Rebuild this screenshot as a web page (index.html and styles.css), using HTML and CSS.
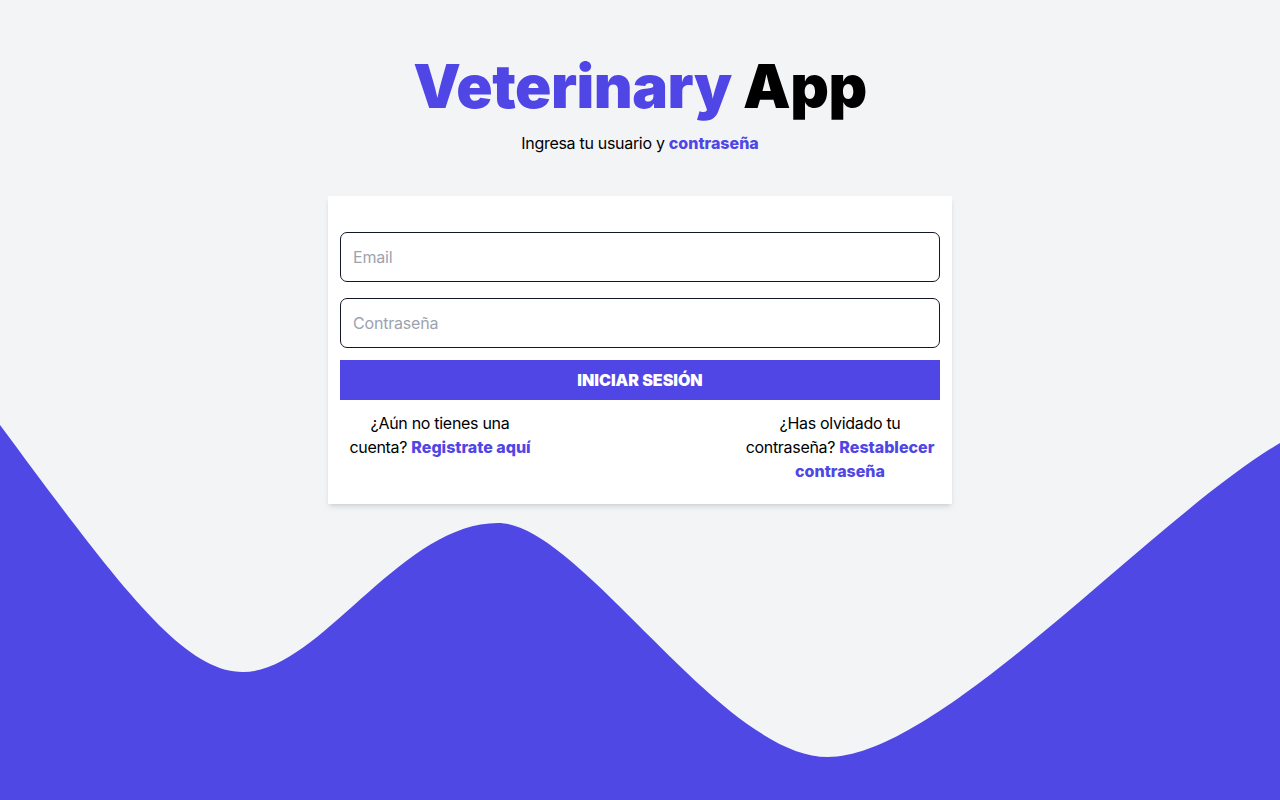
FILE: index.html
```html
<!DOCTYPE html>
<html lang="es">
<head>
<meta charset="utf-8">
<title>Veterinary App</title>
<link rel="stylesheet" href="styles.css">
</head>
<body>
<svg class="wave" viewBox="0 400 1280 400" preserveAspectRatio="none" aria-hidden="true">
  <path d="M0,425 C120,587 183,672 243,672 C320,672 400,523 498,523 C580,523 720,757 828,757 C940,757 1150,520 1280,443 L1280,800 L0,800 Z" fill="#5048e5"/>
</svg>
<main class="page">
  <h1 class="title"><span class="accent">Veterinary</span> App</h1>
  <p class="subtitle">Ingresa tu usuario y <span class="accent-bold">contraseña</span></p>
  <form class="card">
    <input class="field" type="email" placeholder="Email">
    <input class="field" type="password" placeholder="Contraseña">
    <button class="submit" type="button">Iniciar Sesión</button>
    <div class="links">
      <p class="link-col">¿Aún no tienes una cuenta? <a href="#" class="link">Registrate aquí</a></p>
      <p class="link-col">¿Has olvidado tu contraseña? <a href="#" class="link">Restablecer contraseña</a></p>
    </div>
  </form>
</main>
</body>
</html>
```
FILE: styles.css
```css
* { box-sizing: border-box; }
html, body { margin: 0; height: 100%; }
body {
  background: #f3f4f6;
  font-family: Inter, "Noto Sans", sans-serif;
  color: #000;
  overflow: hidden;
  position: relative;
}
.wave {
  position: absolute;
  left: 0;
  bottom: 0;
  width: 100%;
  height: 400px;
  display: block;
}
.page {
  position: relative;
  z-index: 1;
  display: flex;
  flex-direction: column;
  align-items: center;
  padding-top: 56px;
}
.title {
  margin: 0;
  font-size: 60px;
  line-height: 60px;
  font-weight: 900;
  letter-spacing: -0.5px;
}
.accent { color: #4f46e5; }
.subtitle {
  margin: 15px 0 0;
  font-size: 16px;
  line-height: 24px;
  letter-spacing: -0.3px;
}
.accent-bold { color: #4f46e5; font-weight: 800; letter-spacing: 0; }
.card {
  margin-top: 41px;
  width: 624px;
  background: #fff;
  padding: 36px 12px 21px;
  display: flex;
  flex-direction: column;
  box-shadow: 0 4px 6px -1px rgba(0,0,0,0.1), 0 2px 4px -2px rgba(0,0,0,0.1);
}
.field {
  height: 50px;
  border: 1px solid #111827;
  border-radius: 7px;
  padding: 0 12px;
  font-family: inherit;
  font-size: 16px;
  letter-spacing: -0.2px;
  color: #111827;
  background: #fff;
}
.field + .field { margin-top: 16px; }
.field::placeholder { color: #9ca3af; }
.submit {
  margin-top: 12px;
  height: 40px;
  border: 0;
  background: #4f46e5;
  color: #fff;
  font-family: inherit;
  font-size: 16px;
  font-weight: 900;
  text-transform: uppercase;
}
.links {
  margin-top: 11px;
  display: flex;
  justify-content: space-between;
}
.link-col {
  margin: 0;
  width: 200px;
  text-align: center;
  font-size: 16px;
  line-height: 24px;
  letter-spacing: -0.3px;
}
.link {
  color: #4f46e5;
  font-weight: 800;
  letter-spacing: 0;
  text-decoration: none;
}
```
